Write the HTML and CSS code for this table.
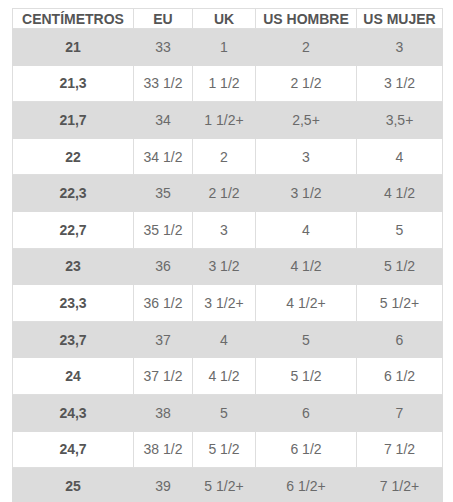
FILE: index.html
```html
<!DOCTYPE html>
<html lang="es">
<head>
<meta charset="utf-8">
<title>Tabla de tallas</title>
<link rel="stylesheet" href="styles.css">
</head>
<body>
<table class="sizes">
  <colgroup>
    <col class="c1"><col class="c2"><col class="c3"><col class="c4"><col class="c5">
  </colgroup>
  <thead>
    <tr><th>CENTÍMETROS</th><th>EU</th><th>UK</th><th>US HOMBRE</th><th>US MUJER</th></tr>
  </thead>
  <tbody>
    <tr class="alt"><td>21</td><td>33</td><td>1</td><td>2</td><td>3</td></tr>
    <tr><td>21,3</td><td>33 1/2</td><td>1 1/2</td><td>2 1/2</td><td>3 1/2</td></tr>
    <tr class="alt"><td>21,7</td><td>34</td><td>1 1/2+</td><td>2,5+</td><td>3,5+</td></tr>
    <tr><td>22</td><td>34 1/2</td><td>2</td><td>3</td><td>4</td></tr>
    <tr class="alt"><td>22,3</td><td>35</td><td>2 1/2</td><td>3 1/2</td><td>4 1/2</td></tr>
    <tr><td>22,7</td><td>35 1/2</td><td>3</td><td>4</td><td>5</td></tr>
    <tr class="alt"><td>23</td><td>36</td><td>3 1/2</td><td>4 1/2</td><td>5 1/2</td></tr>
    <tr><td>23,3</td><td>36 1/2</td><td>3 1/2+</td><td>4 1/2+</td><td>5 1/2+</td></tr>
    <tr class="alt"><td>23,7</td><td>37</td><td>4</td><td>5</td><td>6</td></tr>
    <tr><td>24</td><td>37 1/2</td><td>4 1/2</td><td>5 1/2</td><td>6 1/2</td></tr>
    <tr class="alt"><td>24,3</td><td>38</td><td>5</td><td>6</td><td>7</td></tr>
    <tr><td>24,7</td><td>38 1/2</td><td>5 1/2</td><td>6 1/2</td><td>7 1/2</td></tr>
    <tr class="alt"><td>25</td><td>39</td><td>5 1/2+</td><td>6 1/2+</td><td>7 1/2+</td></tr>
  </tbody>
</table>
</body>
</html>
```
FILE: styles.css
```css
html, body {
  background: #ffffff;
}
body {
  margin: 8px 0 0 12px;
  font-family: "Liberation Sans", Arial, sans-serif;
  font-size: 14px;
}
.sizes {
  border-collapse: collapse;
  table-layout: fixed;
  width: 430px;
}
.c1 { width: 121px; }
.c2 { width: 59px; }
.c3 { width: 63px; }
.c4 { width: 101px; }
.c5 { width: 86px; }
.sizes th,
.sizes td {
  border: 1px solid #dedede;
  text-align: center;
  vertical-align: middle;
  padding: 0;
  white-space: nowrap;
}
.sizes th {
  height: 19px;
  font-weight: bold;
  color: #555555;
  line-height: 16px;
}
.sizes td {
  height: 35.6px;
  color: #6a6a6a;
  line-height: 16px;
}
.sizes td:first-child {
  font-weight: bold;
  color: #555555;
}
.sizes tr.alt td {
  background: #dcdcdc;
  border-color: #dcdcdc;
}
```
